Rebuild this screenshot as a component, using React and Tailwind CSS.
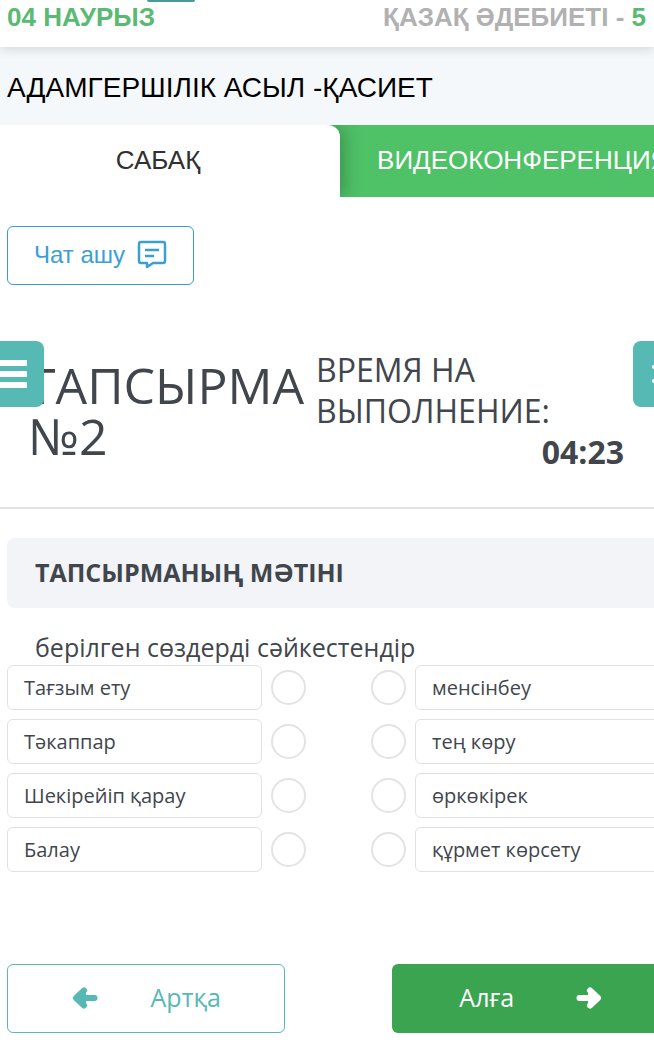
import React, { useState } from "react";

const pairs = [
  { left: "Тағзым ету", right: "менсінбеу" },
  { left: "Тәкаппар", right: "тең көру" },
  { left: "Шекірейіп қарау", right: "өркөкірек" },
  { left: "Балау", right: "құрмет көрсету" },
];

const Arrow = ({ className }) => (
  <svg
    className={className}
    viewBox="0 0 26 22"
    fill="none"
    stroke="currentColor"
    strokeWidth="6"
    strokeLinecap="round"
    strokeLinejoin="round"
  >
    <path d="M3.500 11H18" />
    <path d="M14 3.500L22 11L14 18.500" strokeWidth="6" />
    <path d="M13 5L21 11L13 17Z" fill="currentColor" strokeWidth="2" />
  </svg>
);

const ChatIcon = () => (
  <svg
    className="w-[30px] h-[30px]"
    viewBox="0 0 30 30"
    fill="none"
    stroke="currentColor"
    strokeWidth="2.5"
    strokeLinejoin="round"
  >
    <path d="M4 2H26Q28 2 28 4V21Q28 23 26 23H16L10 27V23H4Q2 23 2 21V4Q2 2 4 2Z" />
    <path d="M8 10H22M8 16H17" />
  </svg>
);

const Choice = ({ id, side, label, checked, onSelect }) => (
  <div
    className={
      side === "left"
        ? "flex w-[45.1%] items-center gap-[9px]"
        : "flex w-[45.1%] flex-row-reverse items-center gap-[9px]"
    }
  >
    <label
      htmlFor={id}
      className="flex h-[45px] flex-1 items-center rounded-md border border-[#dfe1e2] px-4 text-[20px]"
    >
      {label}
    </label>
    <input
      id={id}
      type="radio"
      name={side}
      checked={checked}
      onChange={onSelect}
      className="size-[35px] shrink-0 appearance-none rounded-full border-2 border-[#e2e3e4] checked:border-[#56b9b3]"
    />
  </div>
);

const App = () => {
  const [selected, setSelected] = useState({ left: null, right: null });

  return (
    <div className="relative min-h-screen overflow-hidden bg-white pb-4 font-['Open_Sans',sans-serif] text-[#41464d]">
      <header className="relative flex h-[47px] items-start justify-between pt-[2px] pr-2 pl-[7px] font-['Liberation_Sans',sans-serif] text-[26px] leading-[30px] font-bold shadow-[0_3px_10px_rgba(0,0,0,0.12)]">
        <div className="absolute top-0 left-[147px] h-[2px] w-[48px] rounded-b-full bg-[#4a9a9c]" />
        <span className="text-[#5aba73]">04 НАУРЫЗ</span>
        <span className="text-[#b1b1b1]">
          ҚАЗАҚ ӘДЕБИЕТІ - <span className="text-[#5aba73]">5</span>
        </span>
      </header>

      <div className="flex h-[78px] items-center bg-[#f4f8fb] pt-1 pl-[7px] font-['Liberation_Sans',sans-serif] text-[28px] text-black">
        <h1>АДАМГЕРШІЛІК АСЫЛ -ҚАСИЕТ</h1>
      </div>

      <nav className="flex h-[72px] overflow-hidden bg-[#4fc167] pb-px font-['Liberation_Sans',sans-serif] text-[26px]">
        <button className="-mb-px w-[52%] shrink-0 rounded-tr-xl bg-white pr-6 pb-px text-[#303030] shadow-[4px_0_18px_rgba(0,0,0,0.25)]">
          САБАҚ
        </button>
        <button className="shrink-0 pl-[37px] whitespace-nowrap text-white">
          ВИДЕОКОНФЕРЕНЦИЯ
        </button>
      </nav>

      <button className="mt-[29px] ml-[7px] flex h-[59px] items-center gap-3 rounded-md border border-[#3b9bca] px-[26px] pb-[2px] font-['Liberation_Sans',sans-serif] text-[24px] text-[#3b9fd4]">
        Чат ашу
        <ChatIcon />
      </button>

      <section className="relative mt-14 border-b-2 border-[#e1e2e4]">
        <button
          aria-label="Мәзір"
          className="absolute top-0 left-0 flex h-[66px] w-[44px] items-center rounded-r-lg bg-[#56b9b3]"
        >
          <svg className="h-[30px] w-[28px]" viewBox="0 0 28 30" fill="white">
            <rect x="-4" y="1" width="31" height="6" rx="1" />
            <rect x="-4" y="12" width="31" height="6" rx="1" />
            <rect x="-4" y="23" width="31" height="6" rx="1" />
          </svg>
        </button>
        <button
          aria-label="Тізім"
          className="absolute top-0 right-0 flex h-[66px] w-[21px] items-center justify-end rounded-l-lg bg-[#56b9b3]"
        >
          <svg className="h-5 w-[2px]" viewBox="0 0 2 20" fill="white">
            <circle cx="2" cy="3" r="2" />
            <circle cx="2" cy="17" r="2" />
          </svg>
        </button>
        <div className="flex justify-between gap-3 pt-2 pr-[30px] pb-[35px] pl-7">
          <h2 className="w-[276px] pt-[11px] text-[50px] leading-[51px]">
            ТАПСЫРМА №2
          </h2>
          <div className="flex-1 text-[32px] leading-[41px]">
            <p>ВРЕМЯ НА ВЫПОЛНЕНИЕ:</p>
            <p className="text-right font-bold">04:23</p>
          </div>
        </div>
      </section>

      <main className="-mr-4 ml-[7px]">
        <h3 className="mt-[29px] flex h-[70px] items-center rounded-lg bg-[#f2f4f8] pl-7 text-[25px] font-bold">
          ТАПСЫРМАНЫҢ МӘТІНІ
        </h3>
        <p className="mt-[23px] mb-px pl-7 text-[25px] leading-[33px]">
          берілген сөздерді сәйкестендір
        </p>

        <div className="flex flex-col gap-[9px]">
          {pairs.map((pair, i) => (
            <div className="flex justify-between" key={i}>
              <Choice
                id={`left-${i}`}
                side="left"
                label={pair.left}
                checked={selected.left === i}
                onSelect={() => setSelected({ ...selected, left: i })}
              />
              <Choice
                id={`right-${i}`}
                side="right"
                label={pair.right}
                checked={selected.right === i}
                onSelect={() => setSelected({ ...selected, right: i })}
              />
            </div>
          ))}
        </div>

        <div className="mt-[92px] flex justify-between text-[25px]">
          <button className="flex h-[69px] w-[42%] items-center justify-center gap-[53px] rounded-md border border-[#56b9b3] pb-[2px] text-[#56b9b3]">
            <Arrow className="h-[22px] w-[26px] rotate-180" />
            Артқа
          </button>
          <button className="flex h-[69px] w-[42%] items-center justify-center gap-[62px] rounded-md bg-[#3ba450] pb-[2px] text-white">
            Алға
            <Arrow className="h-[22px] w-[26px]" />
          </button>
        </div>
      </main>
    </div>
  );
};

export default App;
